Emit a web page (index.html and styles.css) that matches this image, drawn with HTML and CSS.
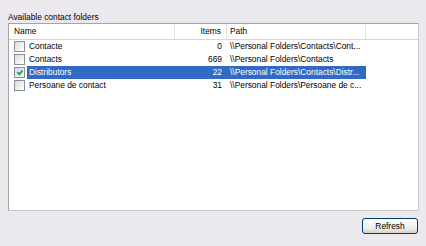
FILE: index.html
```html
<!DOCTYPE html>
<html lang="en">
<head>
    <meta charset="UTF-8">
    <title>Contact Folders</title>
    <link rel="stylesheet" href="styles.css">
</head>
<body>
    <div class="panel">
        <div class="caption">Available contact folders</div>

        <div class="list">
            <div class="row header">
                <div class="col name">Name</div>
                <div class="col items">Items</div>
                <div class="col path">Path</div>
                <div class="col filler"></div>
            </div>

            <div class="row">
                <div class="col name"><span class="check"></span><span class="label">Contacte</span></div>
                <div class="col items">0</div>
                <div class="col path">\\Personal Folders\Contacts\Cont...</div>
            </div>
            <div class="row">
                <div class="col name"><span class="check"></span><span class="label">Contacts</span></div>
                <div class="col items">669</div>
                <div class="col path">\\Personal Folders\Contacts</div>
            </div>
            <div class="row selected">
                <div class="col name"><span class="check checked"></span><span class="label">Distributors</span></div>
                <div class="col items">22</div>
                <div class="col path">\\Personal Folders\Contacts\Distr...</div>
            </div>
            <div class="row">
                <div class="col name"><span class="check"></span><span class="label">Persoane de contact</span></div>
                <div class="col items">31</div>
                <div class="col path">\\Personal Folders\Persoane de c...</div>
            </div>
        </div>

        <div class="actions">
            <button class="btn">Refresh</button>
        </div>
    </div>
</body>
</html>
```

FILE: styles.css
```css
body {
    margin: 0;
    background-color: #ebe9ed;
    font-family: Tahoma, 'Liberation Sans', Arial, sans-serif;
    font-size: 8.4px;
    color: #000;
}
.panel {
    padding: 11px 7px 0 8px;
}
.caption {
    height: 12px;
    line-height: 12px;
}
.list {
    height: 188px;
    background-color: #fff;
    border: 1px solid #a5a5a5;
    border-right-color: #c9c9c9;
    border-bottom-color: #c9c9c9;
    box-sizing: border-box;
}
.row {
    display: flex;
    height: 13px;
    line-height: 13px;
}
.header {
    height: 15px;
    line-height: 15px;
    border-bottom: 1px solid #d5d5d5;
}
.col {
    box-sizing: border-box;
    white-space: nowrap;
    overflow: hidden;
}
.name {
    width: 166px;
    padding-left: 5px;
    display: flex;
    align-items: center;
}
.items {
    width: 52px;
    text-align: right;
    padding-right: 5px;
}
.path {
    width: 139px;
    padding-left: 3px;
}
.filler {
    flex: 1;
}
.header .col {
    border-right: 1px solid #e2e2e2;
}
.header .filler {
    border-right: none;
}
.check {
    width: 11px;
    height: 11px;
    border: 1px solid #8a8e99;
    background: linear-gradient(135deg, #dcdcd6, #ffffff);
    box-sizing: border-box;
    flex-shrink: 0;
    position: relative;
}
.checked::after {
    content: '';
    position: absolute;
    left: 3px;
    top: 1px;
    width: 2px;
    height: 4px;
    border: solid #3fa14a;
    border-width: 0 2px 2px 0;
    transform: rotate(40deg);
}
.label {
    margin-left: 2px;
    padding: 0 2px;
    flex: 1;
}
.selected .label,
.selected .items,
.selected .path {
    background-color: #316ac5;
    color: #fff;
}
.selected .check {
    background: linear-gradient(135deg, #c6d6f0, #ffffff);
}
.actions {
    display: flex;
    justify-content: flex-end;
    padding-top: 7px;
    padding-right: 1px;
}
.btn {
    width: 56px;
    height: 16px;
    padding: 0;
    font-family: inherit;
    font-size: 8.4px;
    color: #000;
    border: 1px solid #003c74;
    border-radius: 3px;
    background: linear-gradient(#ffffff, #ececec 70%, #d6d0c5);
}
```
